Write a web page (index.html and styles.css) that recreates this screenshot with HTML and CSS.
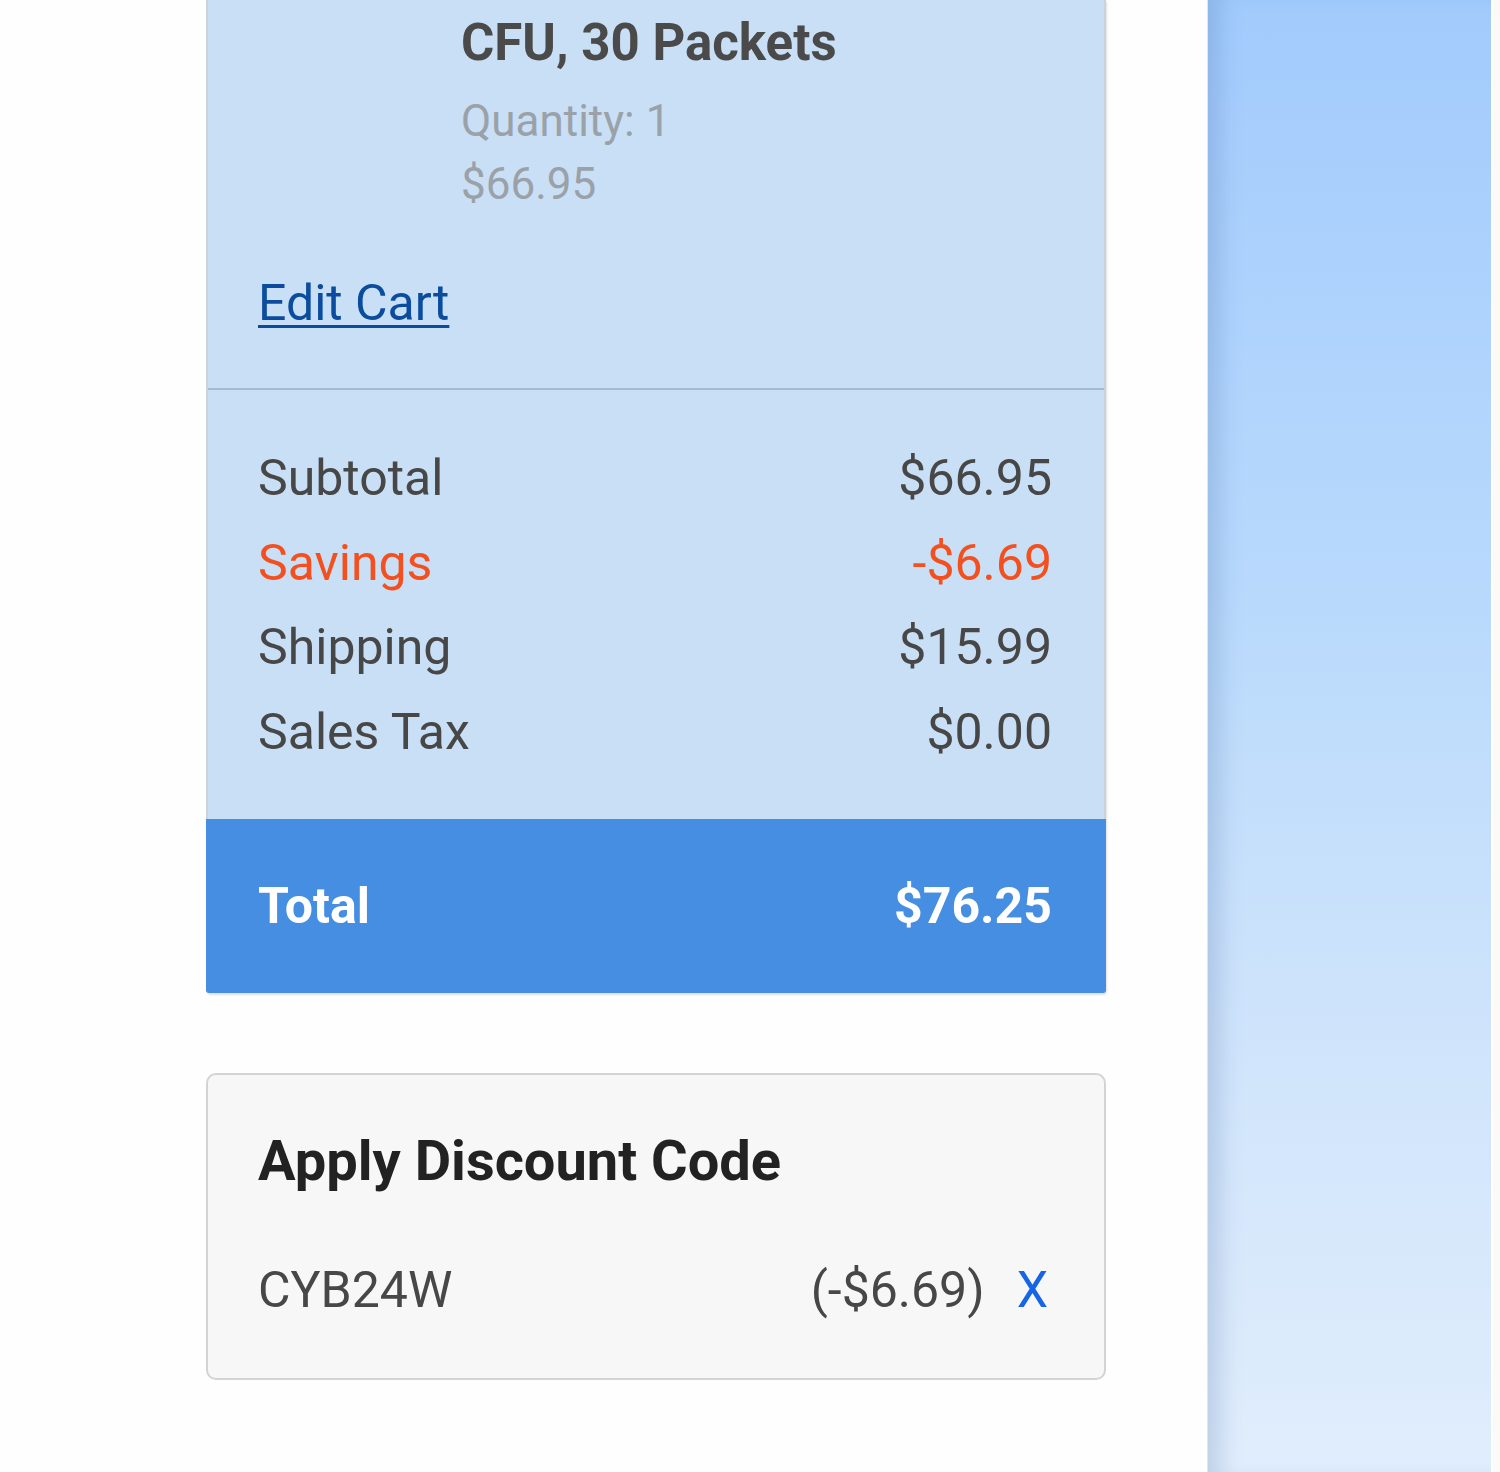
FILE: index.html
```html
<!DOCTYPE html>
<html lang="en">
<head>
<meta charset="utf-8">
<title>Order Summary</title>
<link rel="stylesheet" href="styles.css">
</head>
<body>
<div class="page">
  <main class="main">
    <section class="cart">
      <div class="product">
        <div class="product-info">
          <div class="product-title">CFU, 30 Packets</div>
          <div class="product-meta">Quantity: 1</div>
          <div class="product-meta">$66.95</div>
        </div>
        <a class="edit-link" href="#">Edit Cart</a>
      </div>
      <div class="summary">
        <div class="row"><span>Subtotal</span><span>$66.95</span></div>
        <div class="row savings"><span>Savings</span><span>-$6.69</span></div>
        <div class="row"><span>Shipping</span><span>$15.99</span></div>
        <div class="row"><span>Sales Tax</span><span>$0.00</span></div>
      </div>
      <div class="total"><span>Total</span><span>$76.25</span></div>
    </section>
    <section class="discount">
      <h2 class="discount-title">Apply Discount Code</h2>
      <div class="discount-row">
        <span class="code">CYB24W</span>
        <span class="code-right"><span class="code-amount">(-$6.69)</span><a class="remove" href="#">X</a></span>
      </div>
    </section>
  </main>
  <aside class="side"></aside>
  <div class="edge"></div>
</div>
</body>
</html>
```

FILE: styles.css
```css
html, body {
  margin: 0;
  padding: 0;
}
body {
  background: #fefefe;
  font-family: Roboto, "Liberation Sans", Arial, sans-serif;
  color: #474747;
}
.page {
  display: flex;
  min-height: 1472px;
}
.main {
  width: 900px;
  margin-left: 206px;
  margin-right: 101px;
}
.cart {
  background: #c8dff5;
  border-left: 2px solid #cdd2d8;
  border-right: 2px solid #cdd2d8;
  border-radius: 0 0 4px 4px;
  box-shadow: 1px 2px 2px rgba(0, 0, 0, 0.12);
}
.product {
  padding: 13px 52px 55px 50px;
  border-bottom: 2px solid #a7bbd0;
}
.product-info {
  margin-left: 203px;
}
.product-title {
  font-size: 51px;
  font-weight: 700;
  line-height: 60px;
  color: #4a4a4a;
}
.product-meta {
  font-size: 44px;
  line-height: 63px;
  color: #9ba1a8;
}
.product-title + .product-meta {
  margin-top: 17px;
}
.edit-link {
  display: inline-block;
  margin-top: 57px;
  font-size: 50px;
  line-height: 60px;
  color: #0b4c9e;
  text-decoration: underline;
  text-decoration-thickness: 3px;
  text-underline-offset: 5px;
}
.summary {
  padding: 46px 52px 45px 50px;
}
.row {
  display: flex;
  justify-content: space-between;
  font-size: 50px;
  line-height: 84.5px;
  color: #474747;
}
.row.savings {
  color: #f4501f;
}
.total {
  display: flex;
  justify-content: space-between;
  background: #468ee2;
  color: #ffffff;
  font-size: 50px;
  font-weight: 700;
  line-height: 174px;
  border-radius: 0 0 3px 3px;
  margin: 0 -2px;
  padding-left: 52px;
  padding-right: 54px;
}
.discount {
  margin-top: 80px;
  background: #f7f7f7;
  border: 2px solid #d3d3d3;
  border-radius: 10px;
  padding: 54px 52px 58px 50px;
}
.discount-title {
  margin: 0;
  font-size: 56px;
  font-weight: 700;
  line-height: 64px;
  color: #222222;
}
.discount-row {
  display: flex;
  justify-content: space-between;
  margin-top: 67px;
  font-size: 50px;
  line-height: 60px;
  color: #474747;
}
.code-right {
  display: flex;
  gap: 32px;
}
.remove {
  color: #1565e6;
  text-decoration: none;
  padding-right: 4px;
}
.side {
  width: 283px;
  flex: none;
  background: linear-gradient(180deg, #a2cbfc 0%, #b8d9fc 40%, #cfe4fb 70%, #e0edfc 100%);
  box-shadow: inset 24px 0 22px -12px rgba(40, 80, 140, 0.18);
  border-left: 1px solid #d9e6f3;
}
.edge {
  flex: 1;
  background: #fbfaf7;
  border-left: 2px solid #ffffff;
}
```
